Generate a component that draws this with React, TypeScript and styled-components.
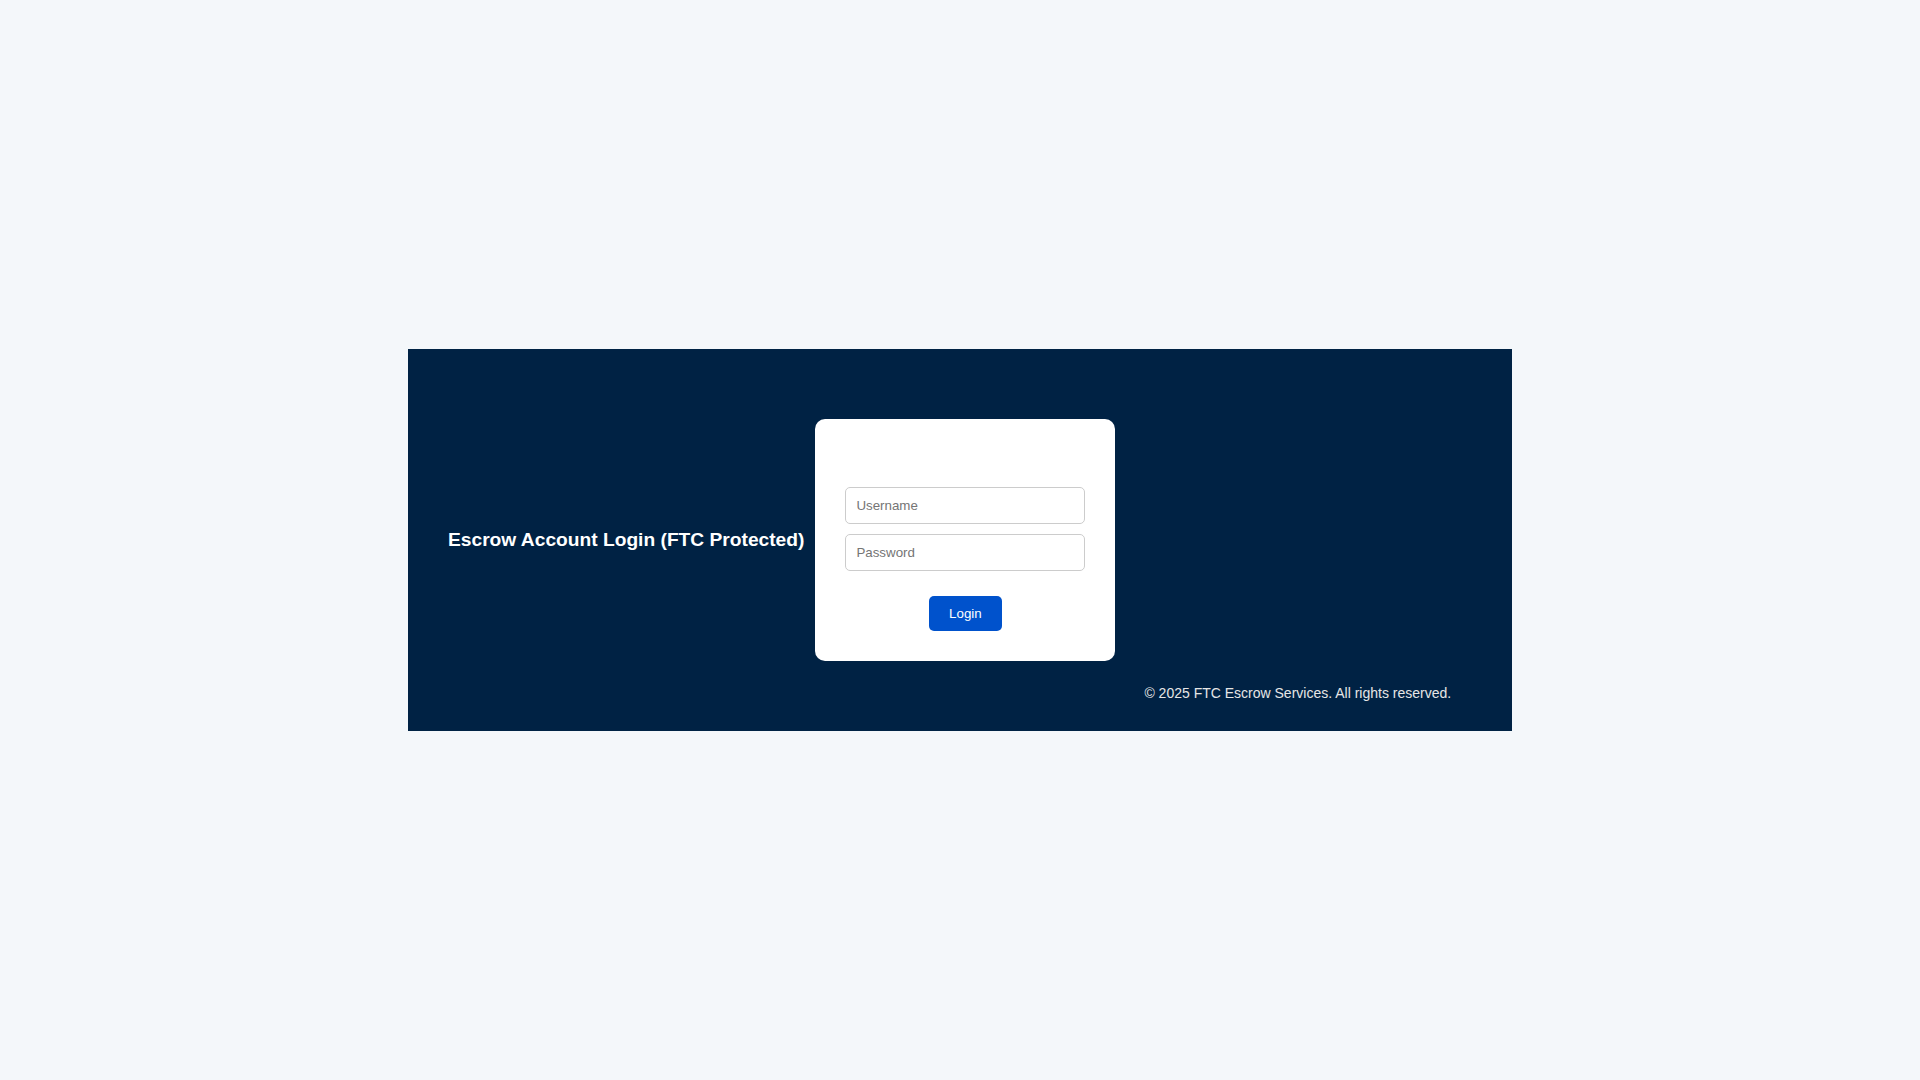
import React from "react";
import styled, { createGlobalStyle } from "styled-components";

const GlobalStyle = createGlobalStyle`
  html, body { margin: 0; padding: 0; }
  body {
    background: #f4f7fa;
    font-family: "Liberation Sans", Arial, sans-serif;
  }
`;

const Page = styled.div`
  min-height: 100vh;
  display: flex;
  align-items: center;
  justify-content: center;
`;

const Panel = styled.div`
  box-sizing: border-box;
  width: 1104px;
  height: 382px;
  background: #002244;
  display: flex;
  align-items: center;
  padding: 0 40px;
`;

const Title = styled.h2`
  margin: 0 11px 0 0;
  color: #ffffff;
  font-size: 19.2px;
  font-weight: bold;
  white-space: nowrap;
`;

const Card = styled.form`
  box-sizing: border-box;
  width: 300px;
  background: #ffffff;
  border-radius: 10px;
  padding: 68px 30px 30px;
  text-align: center;
`;

const Input = styled.input`
  display: block;
  box-sizing: border-box;
  width: 100%;
  height: 37px;
  margin: 0 0 10px;
  padding: 10px;
  border: 1px solid #cccccc;
  border-radius: 5px;
  font-family: "Liberation Sans", Arial, sans-serif;
  font-size: 13.33px;
  color: #333;
  background: #fff;
  &::placeholder { color: #757575; }
`;

const Button = styled.button`
  margin-top: 15px;
  height: 35px;
  padding: 0 20px;
  border: none;
  border-radius: 5px;
  background: #0052cc;
  color: #ffffff;
  font-family: "Liberation Sans", Arial, sans-serif;
  font-size: 13.33px;
  cursor: pointer;
`;

const Footer = styled.footer`
  align-self: flex-end;
  margin: 0 0 30px 29px;
  color: #e6e6e6;
  font-size: 14px;
  white-space: nowrap;
`;

export default function App() {
  return (
    <>
      <GlobalStyle />
      <Page>
        <Panel>
          <Title>Escrow Account Login (FTC Protected)</Title>
          <Card onSubmit={(e) => e.preventDefault()}>
            <Input type="text" placeholder="Username" />
            <Input type="password" placeholder="Password" />
            <Button type="submit">Login</Button>
          </Card>
          <Footer>© 2025 FTC Escrow Services. All rights reserved.</Footer>
        </Panel>
      </Page>
    </>
  );
}
